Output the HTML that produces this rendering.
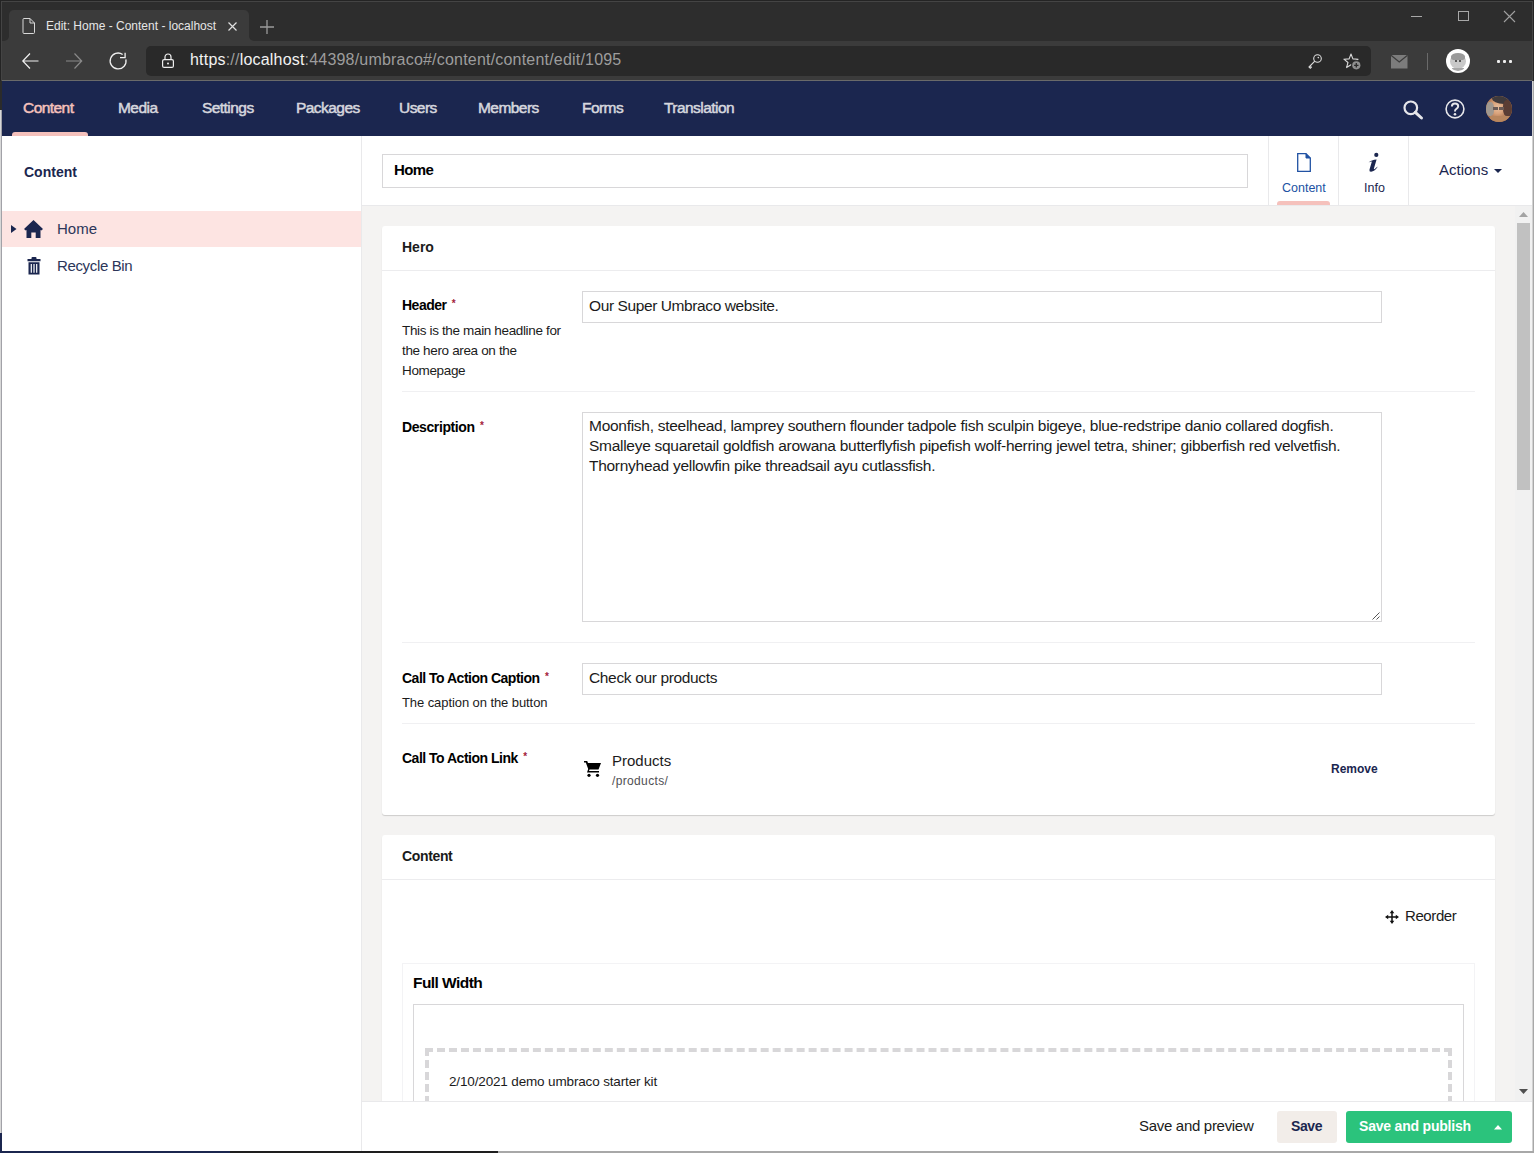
<!DOCTYPE html>
<html><head><meta charset="utf-8">
<style>
*{box-sizing:border-box;margin:0;padding:0}
html,body{width:1534px;height:1153px;overflow:hidden;background:#fff;font-family:"Liberation Sans",sans-serif}
.a{position:absolute}
.t{position:absolute;white-space:nowrap;line-height:1}
svg{position:absolute;overflow:visible}
</style></head><body>
<!-- ===== Browser chrome ===== -->
<div class="a" style="left:0;top:0;width:1534px;height:81px;background:#242424"></div>
<div class="a" style="left:1px;top:1px;width:1532px;height:80px;background:#444"></div>
<div class="a" style="left:2px;top:2px;width:1530px;height:79px;background:#2d2d2d"></div>
<div class="a" style="left:2px;top:34px;width:1530px;height:46px;background:#3b3b3b"></div>
<div class="a" style="left:2px;top:2px;width:7px;height:39px;background:#2d2d2d;border-bottom-right-radius:5px"></div>
<div class="a" style="left:249px;top:2px;width:1283px;height:39px;background:#2d2d2d;border-bottom-left-radius:5px"></div>
<div class="a" style="left:9px;top:10px;width:240px;height:32px;background:#3b3b3b;border-radius:5px 5px 0 0"></div>
<div class="a" style="left:2px;top:80px;width:1530px;height:1px;background:#6a6a6a"></div>
<!-- tab -->
<svg style="left:22px;top:18px" width="13" height="16" viewBox="0 0 13 16"><path d="M1 1.5 Q1 .5 2 .5 H8 L12.5 5 V14.5 Q12.5 15.5 11.5 15.5 H2 Q1 15.5 1 14.5 Z M8 .5 V5 H12.5" fill="none" stroke="#d8d8d8" stroke-width="1"/></svg>
<div class="t" style="left:46px;top:20px;font-size:12px;color:#e6e6e6">Edit: Home - Content - localhost</div>
<svg style="left:228px;top:22px" width="9" height="9" viewBox="0 0 9 9"><path d="M.5 .5 L8.5 8.5 M8.5 .5 L.5 8.5" stroke="#e0e0e0" stroke-width="1.2"/></svg>
<svg style="left:260px;top:20px" width="14" height="14" viewBox="0 0 14 14"><path d="M7 0 V14 M0 7 H14" stroke="#9a9a9a" stroke-width="1.3"/></svg>
<!-- window controls -->
<div class="a" style="left:1411px;top:16px;width:11px;height:1px;background:#a8a8a8"></div>
<div class="a" style="left:1458px;top:11px;width:11px;height:10px;border:1px solid #a8a8a8"></div>
<svg style="left:1504px;top:11px" width="11" height="11" viewBox="0 0 11 11"><path d="M0 0 L11 11 M11 0 L0 11" stroke="#a0a0a0" stroke-width="1.1"/></svg>
<!-- toolbar -->
<svg style="left:22px;top:53px" width="17" height="16" viewBox="0 0 17 16"><path d="M16.5 8 H1 M8 .5 L.8 8 L8 15.5" fill="none" stroke="#f0f0f0" stroke-width="1.2"/></svg>
<svg style="left:66px;top:53px" width="17" height="16" viewBox="0 0 17 16"><path d="M0 8 H15.5 M8.5 .5 L15.7 8 L8.5 15.5" fill="none" stroke="#8a8a8a" stroke-width="1.2"/></svg>
<svg style="left:109px;top:52px" width="18" height="18" viewBox="0 0 18 18"><path d="M16.88 7.35 A7.95 7.95 0 1 1 13.66 2.49" fill="none" stroke="#f0f0f0" stroke-width="1.3"/><path d="M11 5.6 H16.1 V0.8" fill="none" stroke="#f0f0f0" stroke-width="1.3"/></svg>
<div class="a" style="left:146px;top:46px;width:1225px;height:30px;background:#292929;border-radius:5px"></div>
<svg style="left:162px;top:53px" width="12" height="15" viewBox="0 0 12 15"><path d="M3 6.5 V4 A3 3 0 0 1 9 4 V6.5" fill="none" stroke="#eee" stroke-width="1.2"/><rect x=".6" y="6.6" width="10.8" height="7.8" rx="1.5" fill="none" stroke="#eee" stroke-width="1.2"/><circle cx="6" cy="10.5" r="1" fill="#eee"/></svg>
<div class="t" style="left:190px;top:52px;font-size:16px;letter-spacing:0.2px;color:#9d9d9d"><span style="color:#f2f2f2">https</span>://<span style="color:#f2f2f2">localhost</span>:44398/umbraco#/content/content/edit/1095</div>
<svg style="left:1308px;top:54px" width="14" height="15" viewBox="0 0 14 15"><circle cx="9.5" cy="4.5" r="3.8" fill="none" stroke="#ddd" stroke-width="1.1"/><circle cx="10.3" cy="3.6" r=".8" fill="#ddd"/><path d="M6.8 7.2 L1 13 L2.3 14.2 L3.3 13.2 L2.6 12.4" fill="none" stroke="#ddd" stroke-width="1.1"/></svg>
<svg style="left:1343px;top:53px" width="18" height="17" viewBox="0 0 18 17"><path d="M8 1 L9.88 5.91 L15.13 6.18 L11.04 9.49 L12.41 14.57 L8 11.7 L3.59 14.57 L4.96 9.49 L0.87 6.18 L6.12 5.91 Z" fill="none" stroke="#d8d8d8" stroke-width="1.1" stroke-linejoin="round"/><circle cx="13.3" cy="12.3" r="5.2" fill="#292929"/><circle cx="13.3" cy="12.3" r="4.1" fill="#8f8f8f"/><path d="M13.3 10.1 V14.5 M11.1 12.3 H15.5" stroke="#2a2a2a" stroke-width="1.3"/></svg>
<svg style="left:1391px;top:55px" width="17" height="14" viewBox="0 0 17 14"><rect x="0" y="0" width="16.5" height="13.5" fill="#7c7c7c"/><path d="M0 .3 L8.25 7 L16.5 .3" fill="none" stroke="#3b3b3b" stroke-width="1.2"/></svg>
<div class="a" style="left:1427px;top:53px;width:1px;height:17px;background:#6a6a6a"></div>
<div class="a" style="left:1446px;top:49px;width:24px;height:24px;border-radius:50%;background:#fff"></div>
<div class="a" style="left:1448px;top:51px;width:20px;height:20px;border-radius:50%;overflow:hidden">
<div class="a" style="left:2px;top:3px;width:16px;height:15px;border-radius:50%;background:#c9c9c9"></div>
<div class="a" style="left:3px;top:2px;width:14px;height:7px;border-radius:50% 50% 30% 30%;background:#9a9a9a"></div>
<div class="a" style="left:7px;top:9px;width:2px;height:2px;border-radius:50%;background:#333"></div>
<div class="a" style="left:11px;top:9px;width:2px;height:2px;border-radius:50%;background:#333"></div>
<div class="a" style="left:4px;top:17px;width:12px;height:4px;background:#a8a8a8"></div>
</div>
<div class="a" style="left:1497px;top:60px;width:3px;height:3px;background:#eee;border-radius:1px"></div>
<div class="a" style="left:1503px;top:60px;width:3px;height:3px;background:#eee;border-radius:1px"></div>
<div class="a" style="left:1509px;top:60px;width:3px;height:3px;background:#eee;border-radius:1px"></div>

<!-- ===== Umbraco header ===== -->
<div class="a" style="left:0;top:81px;width:1534px;height:55px;background:#1b264f"></div>
<div class="a" style="left:12px;top:132px;width:76px;height:4px;background:#f5c1bc;border-radius:3px 3px 0 0"></div>
<div id="nav" class="t" style="top:100px;font-size:15.5px;color:#d6d7de;-webkit-text-stroke:0.5px #d6d7de;letter-spacing:-0.55px">
<span class="t" style="left:23px;color:#f5c1bc;-webkit-text-stroke:0.5px #f5c1bc">Content</span>
<span class="t" style="left:118px">Media</span>
<span class="t" style="left:202px">Settings</span>
<span class="t" style="left:296px">Packages</span>
<span class="t" style="left:399px">Users</span>
<span class="t" style="left:478px">Members</span>
<span class="t" style="left:582px">Forms</span>
<span class="t" style="left:664px">Translation</span>
</div>


<svg style="left:1403px;top:100px" width="20" height="19" viewBox="0 0 20 19"><circle cx="7.8" cy="7.8" r="6.3" fill="none" stroke="#e6e6ea" stroke-width="2.2"/><path d="M12.3 12.3 L18.5 18" stroke="#e6e6ea" stroke-width="3" stroke-linecap="round"/></svg>
<svg style="left:1445px;top:99px" width="20" height="20" viewBox="0 0 20 20"><circle cx="10" cy="10" r="8.9" fill="none" stroke="#e6e6ea" stroke-width="1.6"/><path d="M6.9 7.6 Q6.9 4.6 10 4.6 Q13.2 4.6 13.2 7.3 Q13.2 9 11.2 10 Q10 10.7 10 12.4" fill="none" stroke="#e6e6ea" stroke-width="2"/><circle cx="10" cy="15.2" r="1.3" fill="#e6e6ea"/></svg>
<div class="a" style="left:1486px;top:96px;width:26px;height:26px;border-radius:50%;overflow:hidden;background:#b07a55">
<div class="a" style="left:0;top:0;width:26px;height:26px;background:radial-gradient(ellipse at 45% 45%,#e8c0a0 0,#d9a27a 30%,#a8714e 60%,#6a4638 100%)"></div>
<div class="a" style="left:6px;top:-4px;width:24px;height:12px;border-radius:50%;background:#3f3a3c"></div>
<div class="a" style="left:17px;top:4px;width:10px;height:16px;border-radius:40%;background:#5a3d34"></div>
<div class="a" style="left:0;top:6px;width:8px;height:14px;border-radius:40%;background:#a09890"></div>
<div class="a" style="left:7px;top:11px;width:5px;height:3px;background:#6a5a55"></div>
<div class="a" style="left:13px;top:11px;width:5px;height:3px;background:#6a5a55"></div>
<div class="a" style="left:4px;top:20px;width:20px;height:8px;background:#b8865e"></div>
</div>
<!-- ===== Sidebar ===== -->
<div class="a" style="left:0;top:136px;width:362px;height:1017px;background:#fff;border-right:1px solid #e9e9eb"></div>
<div class="a" style="left:0;top:81px;width:2px;height:29px;background:#2b2b2b"></div>
<div class="a" style="left:0;top:110px;width:1px;height:1023px;background:#d8d8d8"></div>
<div class="a" style="left:1px;top:110px;width:1px;height:1041px;background:#a2a2a8"></div>
<div class="a" style="left:0;top:1133px;width:2px;height:20px;background:#1b264f"></div>
<div class="t" style="left:24px;top:165px;font-size:14px;font-weight:bold;color:#1b264f">Content</div>
<div class="a" style="left:2px;top:211px;width:359px;height:36px;background:#fde4e2"></div>
<svg style="left:11px;top:225px" width="6" height="8" viewBox="0 0 6 8"><path d="M0 0 L5.5 4 L0 8Z" fill="#1b264f"/></svg>
<svg style="left:24px;top:220px" width="19" height="18" viewBox="0 0 19 18"><path d="M9.5 0 L19 9 L17.3 10.6 L16.5 9.9 V18 H11.7 V12.6 H7.3 V18 H2.5 V9.9 L1.7 10.6 L0 9 Z" fill="#1b264f"/></svg>
<div class="t" style="left:57px;top:221px;font-size:15px;color:#2c3659">Home</div>
<svg style="left:27px;top:257px" width="14" height="18" viewBox="0 0 14 18"><path d="M4.5 2 V1 Q4.5 0 5.5 0 H8.5 Q9.5 0 9.5 1 V2 H13.5 V4.2 H.5 V2 Z M1.5 5.2 H12.5 V17.5 H1.5 Z" fill="#1b264f"/><path d="M4.3 7 V15.8 M7 7 V15.8 M9.7 7 V15.8" stroke="#fff" stroke-width="1.2"/></svg>
<div class="t" style="left:57px;top:258px;font-size:15px;letter-spacing:-0.35px;color:#2c3659">Recycle Bin</div>

<!-- ===== Editor header ===== -->
<div class="a" style="left:362px;top:136px;width:1172px;height:70px;background:#fff;border-bottom:1px solid #e9e9eb"></div>
<div class="a" style="left:382px;top:154px;width:866px;height:34px;border:1px solid #d8d7d9"></div>
<div class="t" style="left:394px;top:162px;font-size:15px;letter-spacing:-0.6px;font-weight:bold;color:#000">Home</div>
<div class="a" style="left:1268px;top:136px;width:1px;height:69px;background:#e9e9eb"></div>
<div class="a" style="left:1338px;top:136px;width:1px;height:69px;background:#e9e9eb"></div>
<div class="a" style="left:1408px;top:136px;width:1px;height:69px;background:#e9e9eb"></div>
<svg style="left:1297px;top:153px" width="14" height="19" viewBox="0 0 14 19"><path d="M.7 .7 H9 L13.3 5 V18.3 H.7 Z" fill="none" stroke="#2152a3" stroke-width="1.3"/><path d="M9 .7 V5 H13.3" fill="#2152a3" stroke="#2152a3" stroke-width="1"/></svg>
<div class="t" style="left:1282px;top:182px;font-size:12.5px;color:#2152a3">Content</div>
<div class="a" style="left:1277px;top:201px;width:53px;height:4px;background:#f5c1bc;border-radius:3px 3px 0 0"></div>
<svg style="left:1368px;top:152px" width="12" height="21" viewBox="0 0 12 21"><circle cx="8.3" cy="2.9" r="2.1" fill="#1b264f"/><path d="M0.6 10.6 Q3.5 7.6 8.6 7.4 L5.9 16.5 Q5.7 17.6 6.7 17 L9.6 14.6 L9.2 15.6 Q6.5 19.6 3.1 19.8 Q0.9 19.9 1.5 17.6 L3.9 9.6 Q2.4 9.7 0.6 10.6 Z" fill="#1b264f"/></svg>
<div class="t" style="left:1364px;top:182px;font-size:12.5px;color:#1b264f">Info</div>
<div class="t" style="left:1439px;top:162px;font-size:15px;color:#1b264f">Actions</div>
<svg style="left:1494px;top:169px" width="8" height="4" viewBox="0 0 8 4"><path d="M0 0 H8 L4 4Z" fill="#1b264f"/></svg>

<!-- ===== Editor body ===== -->
<div class="a" style="left:362px;top:206px;width:1172px;height:895px;background:#f4f3f2"></div>
<!-- scrollbar -->
<div class="a" style="left:1515px;top:206px;width:17px;height:895px;background:#f1f1f1"></div>
<div class="a" style="left:1517px;top:223px;width:13px;height:267px;background:#c1c1c1"></div>
<svg style="left:1519px;top:212px" width="9" height="5" viewBox="0 0 9 5"><path d="M0 5 H9 L4.5 0Z" fill="#a3a3a3"/></svg>
<svg style="left:1519px;top:1089px" width="9" height="5" viewBox="0 0 9 5"><path d="M0 0 H9 L4.5 5Z" fill="#505050"/></svg>
<div class="a" style="left:1532px;top:81px;width:2px;height:1072px;background:#d2d2d2"></div>
<div class="a" style="left:1533px;top:81px;width:1px;height:1072px;background:#a8a8a8"></div>

<!-- Hero panel -->
<div class="a" style="left:382px;top:226px;width:1113px;height:589px;background:#fff;border-radius:3px;box-shadow:0 1px 1px rgba(0,0,0,.16)"></div>
<div class="t" style="left:402px;top:240px;font-size:14px;font-weight:bold;color:#1b1b1b">Hero</div>
<div class="a" style="left:382px;top:270px;width:1113px;height:1px;background:#ececee"></div>

<div class="t" style="left:402px;top:298px;font-size:14px;letter-spacing:-0.5px;font-weight:bold;color:#000">Header <span style="color:#a3223a;font-size:10px;vertical-align:3px;letter-spacing:0;margin-left:2px">*</span></div>
<div class="a" style="left:402px;top:321px;width:170px;font-size:13.5px;letter-spacing:-0.35px;line-height:20px;color:#1b1b1b">This is the main headline for the hero area on the Homepage</div>
<div class="a" style="left:582px;top:291px;width:800px;height:32px;border:1px solid #d8d7d9"></div>
<div class="t" style="left:589px;top:298px;font-size:15.5px;letter-spacing:-0.4px;color:#1b1b1b">Our Super Umbraco website.</div>
<div class="a" style="left:402px;top:391px;width:1073px;height:1px;background:#f0f0f2"></div>

<div class="t" style="left:402px;top:420px;font-size:14px;letter-spacing:-0.4px;font-weight:bold;color:#000">Description <span style="color:#a3223a;font-size:10px;vertical-align:3px;letter-spacing:0;margin-left:2px">*</span></div>
<div class="a" style="left:582px;top:412px;width:800px;height:210px;border:1px solid #d8d7d9"></div>
<div class="a" style="left:589px;top:416px;width:790px;font-size:15.5px;letter-spacing:-0.28px;line-height:20px;color:#1b1b1b;white-space:nowrap">Moonfish, steelhead, lamprey southern flounder tadpole fish sculpin bigeye, blue-redstripe danio collared dogfish.<br>Smalleye squaretail goldfish arowana butterflyfish pipefish wolf-herring jewel tetra, shiner; gibberfish red velvetfish.<br>Thornyhead yellowfin pike threadsail ayu cutlassfish.</div>
<svg style="left:1372px;top:612px" width="8" height="8" viewBox="0 0 8 8"><path d="M7.5 .5 L.5 7.5 M7.5 4.5 L4.5 7.5" stroke="#555" stroke-width="1"/></svg>
<div class="a" style="left:402px;top:642px;width:1073px;height:1px;background:#f0f0f2"></div>

<div class="t" style="left:402px;top:671px;font-size:14px;letter-spacing:-0.5px;font-weight:bold;color:#000">Call To Action Caption <span style="color:#a3223a;font-size:10px;vertical-align:3px;letter-spacing:0;margin-left:2px">*</span></div>
<div class="t" style="left:402px;top:696px;font-size:13px;letter-spacing:-0.08px;color:#1b1b1b">The caption on the button</div>
<div class="a" style="left:582px;top:663px;width:800px;height:32px;border:1px solid #d8d7d9"></div>
<div class="t" style="left:589px;top:670px;font-size:15.5px;letter-spacing:-0.35px;color:#1b1b1b">Check our products</div>
<div class="a" style="left:402px;top:723px;width:1073px;height:1px;background:#f0f0f2"></div>

<div class="t" style="left:402px;top:751px;font-size:14px;letter-spacing:-0.5px;font-weight:bold;color:#000">Call To Action Link <span style="color:#a3223a;font-size:10px;vertical-align:3px;letter-spacing:0;margin-left:2px">*</span></div>
<svg style="left:584px;top:761px" width="17" height="16" viewBox="0 0 17 16"><path d="M0 0 H3.2 L4 2 H17 L14.5 8.5 H5.5 L5 10 H15 V11.6 H3 L4.2 8 L1.8 1.6 H0Z" fill="#000"/><circle cx="5" cy="14.3" r="1.6" fill="#000"/><circle cx="13.5" cy="14.3" r="1.6" fill="#000"/></svg>
<div class="t" style="left:612px;top:753px;font-size:15px;color:#1b1b1b">Products</div>
<div class="t" style="left:612px;top:775px;font-size:12px;letter-spacing:0.35px;color:#515054">/products/</div>
<div class="t" style="left:1331px;top:763px;font-size:12px;font-weight:bold;color:#1b264f">Remove</div>

<!-- Content panel -->
<div class="a" style="left:382px;top:835px;width:1113px;height:300px;background:#fff;border-radius:3px;box-shadow:0 1px 1px rgba(0,0,0,.16)"></div>
<div class="t" style="left:402px;top:849px;font-size:14px;letter-spacing:-0.35px;font-weight:bold;color:#1b1b1b">Content</div>
<div class="a" style="left:382px;top:879px;width:1113px;height:1px;background:#ececee"></div>
<svg style="left:1385px;top:910px" width="14" height="14" viewBox="0 0 14 14"><path d="M7 2 V12 M2 7 H12" stroke="#111" stroke-width="1.5"/><path d="M7 0 L9.3 3.2 H4.7Z M7 14 L9.3 10.8 H4.7Z M0 7 L3.2 4.7 V9.3Z M14 7 L10.8 4.7 V9.3Z" fill="#111"/></svg>
<div class="t" style="left:1405px;top:908px;font-size:15px;letter-spacing:-0.4px;color:#1b1b1b">Reorder</div>
<div class="a" style="left:402px;top:963px;width:1073px;height:200px;border:1px solid #f3f3f5"></div>
<div class="t" style="left:413px;top:975px;font-size:15.5px;letter-spacing:-0.55px;font-weight:bold;color:#000">Full Width</div>
<div class="a" style="left:413px;top:1004px;width:1051px;height:200px;border:1px solid #d8d7d9"></div>
<div class="a" style="left:425px;top:1048px;width:1027px;height:200px;border:4px dashed #d8d7d9"></div>
<div class="t" style="left:449px;top:1075px;font-size:13.5px;letter-spacing:-0.15px;color:#1b1b1b">2/10/2021 demo umbraco starter kit</div>

<!-- Footer -->
<div class="a" style="left:362px;top:1101px;width:1170px;height:50px;background:#fff;border-top:1px solid #e9e9eb"></div>
<div class="t" style="left:1139px;top:1118px;font-size:15px;letter-spacing:-0.3px;color:#1b1b1b">Save and preview</div>
<div class="a" style="left:1277px;top:1111px;width:60px;height:32px;background:#f2ede9;border-radius:3px"></div>
<div class="t" style="left:1291px;top:1119px;font-size:14px;letter-spacing:-0.4px;font-weight:bold;color:#1b264f">Save</div>
<div class="a" style="left:1346px;top:1111px;width:166px;height:32px;background:#2bc37c;border-radius:3px"></div>
<div class="t" style="left:1359px;top:1119px;font-size:14px;letter-spacing:-0.2px;font-weight:bold;color:#fff">Save and publish</div>
<svg style="left:1494px;top:1125px" width="8" height="5" viewBox="0 0 8 5"><path d="M0 4.5 H8 L4 0Z" fill="#fff"/></svg>
<div class="a" style="left:0;top:1151px;width:1534px;height:2px;background:#a8a8a8"></div>
<div class="a" style="left:0;top:1151px;width:498px;height:2px;background:#1e1e1e"></div>
<div class="a" style="left:0;top:1151px;width:230px;height:2px;background:#1b264f"></div>
</body></html>
